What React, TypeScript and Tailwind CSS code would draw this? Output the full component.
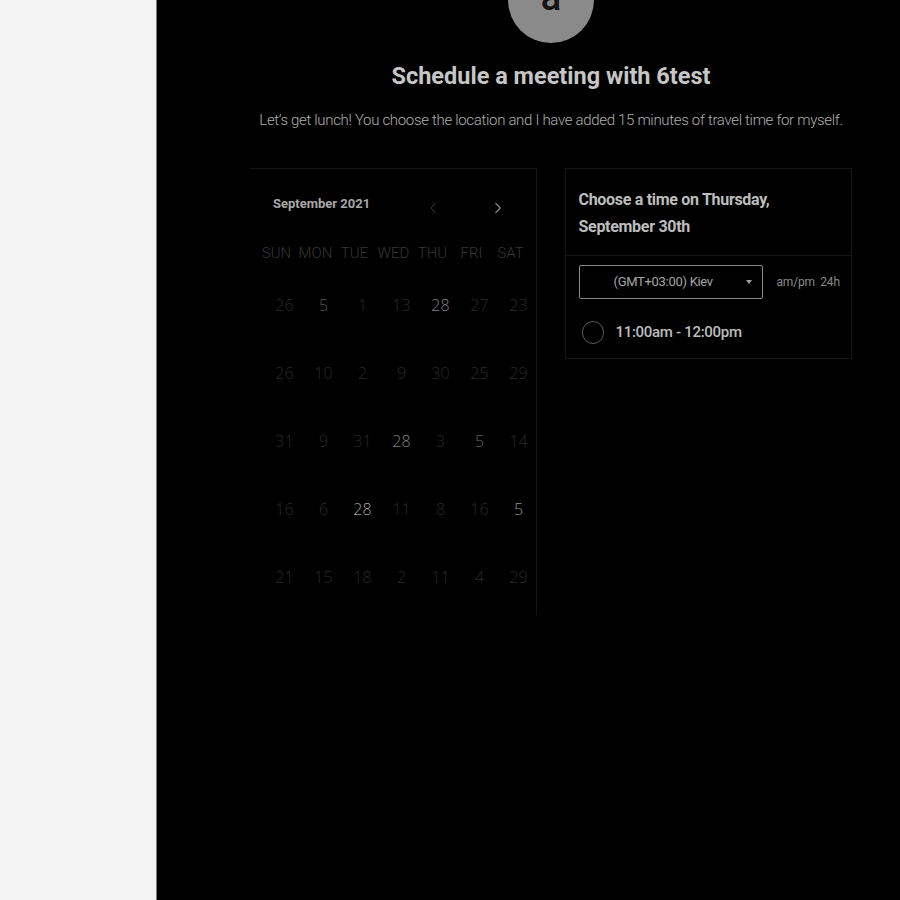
import { ChevronLeft, ChevronRight } from 'lucide-react';

const weekdays = ['SUN', 'MON', 'TUE', 'WED', 'THU', 'FRI', 'SAT'];

// [label, color]
const dim = 'text-[#2a2a2a]';
const days: [string, string][][] = [
  [['26', dim], ['5', 'text-[#555555]'], ['1', dim], ['13', dim], ['28', 'text-[#808080]'], ['27', dim], ['23', dim]],
  [['26', dim], ['10', dim], ['2', dim], ['9', dim], ['30', dim], ['25', dim], ['29', dim]],
  [['31', dim], ['9', dim], ['31', dim], ['28', 'text-[#808080]'], ['3', dim], ['5', 'text-[#606060]'], ['14', dim]],
  [['16', dim], ['6', dim], ['28', 'text-[#a0a0a0]'], ['11', dim], ['8', dim], ['16', dim], ['5', 'text-[#909090]']],
  [['21', dim], ['15', dim], ['18', dim], ['2', dim], ['11', dim], ['4', dim], ['29', dim]],
];

const Calendar = () => (
  <div className="w-[287px] h-[447px] border-t border-r border-[#151515]">
    <div className="flex items-center pt-[26px] pl-[23px] h-[44px]">
      <span className="text-[13px] leading-[18px] font-bold text-[#a8a8a8] w-[150px]">September 2021</span>
      <ChevronLeft className="ml-[2px] mt-[8px] text-[#3a3a3a]" size={16} strokeWidth={1.5} />
      <ChevronRight className="ml-[48px] mt-[8px] text-[#8a8a8a]" size={18} strokeWidth={1.5} />
    </div>
    <div className="grid grid-cols-7 w-[273px] ml-[7px] mt-[30px]">
      {weekdays.map((d) => (
        <div key={d} className="text-center text-[15px] leading-[20px] font-light text-[#363636]">
          {d}
        </div>
      ))}
    </div>
    <div className="mt-[8px] ml-[7px] w-[273px]">
      {days.map((row, i) => (
        <div key={i} className="grid grid-cols-7 h-[68px] items-center">
          {row.map(([n, c], j) => (
            <div
              key={j}
              className={`text-center pl-[16px] text-[16px] font-light ${c}`}
              style={{ fontFamily: '"Open Sans", sans-serif' }}
            >
              {n}
            </div>
          ))}
        </div>
      ))}
    </div>
  </div>
);

const TimePanel = () => (
  <div className="w-[288px] h-[191px] border border-[#151515]">
    <div className="px-[13px] pt-[17px] pb-[15px] border-b border-[#151515]">
      <h2 className="text-[16px] leading-[27px] font-bold text-[#bdbdbd] tracking-[-0.3px]">
        Choose a time on Thursday,
        <br />
        September 30th
      </h2>
    </div>
    <div className="flex items-center pl-[13px] pt-[9px]">
      <div className="relative w-[184px] h-[34px] border border-[#8a8a8a] rounded-[2px] flex items-center">
        <span className="ml-[34px] text-[13px] text-[#a5a5a5] tracking-[-0.3px]">(GMT+03:00) Kiev</span>
        <span className="absolute right-[10px] top-[14px] w-0 h-0 border-l-[3px] border-r-[3px] border-t-[4px] border-l-transparent border-r-transparent border-t-[#a0a0a0]" />
      </div>
      <span className="ml-[14px] text-[12px] text-[#8a8a8a] tracking-[-0.2px]">am/pm&nbsp; 24h</span>
    </div>
    <div className="flex items-center pl-[16px] mt-[22px]">
      <div className="w-[22px] h-[23px] rounded-full border-[1.5px] border-[#5a5a5a]" />
      <span className="ml-[12px] text-[15px] font-medium text-[#bdbdbd] tracking-[-0.3px]">11:00am - 12:00pm</span>
    </div>
  </div>
);

export default function App() {
  return (
    <div className="flex w-[900px] h-[900px] overflow-hidden" style={{ fontFamily: 'Roboto, "Liberation Sans", sans-serif' }}>
      <aside className="w-[157px] shrink-0 bg-[#f3f3f3] border-r border-[#7a7a7a]" />
      <main className="flex-1 bg-black">
        <div className="w-[602px] ml-[93px] flex flex-col items-center">
          <div className="w-[86px] h-[86px] -mt-[43px] rounded-full bg-[#8a8a8a] flex items-center justify-center">
            <span className="text-[38px] leading-none text-[#141414] font-medium -mt-[6px]">a</span>
          </div>
          <h1 className="mt-[19px] text-[23.5px] leading-[28px] font-bold text-[#c6c6c6] whitespace-nowrap">
            Schedule a meeting with 6test
          </h1>
          <p className="mt-[20px] text-[15px] leading-[20px] font-light text-[#b0b0b0] tracking-[-0.32px] whitespace-nowrap">
            Let’s get lunch! You choose the location and I have added 15 minutes of travel time for myself.
          </p>
          <div className="mt-[38px] w-full flex gap-[28px]">
            <Calendar />
            <TimePanel />
          </div>
        </div>
      </main>
    </div>
  );
}
